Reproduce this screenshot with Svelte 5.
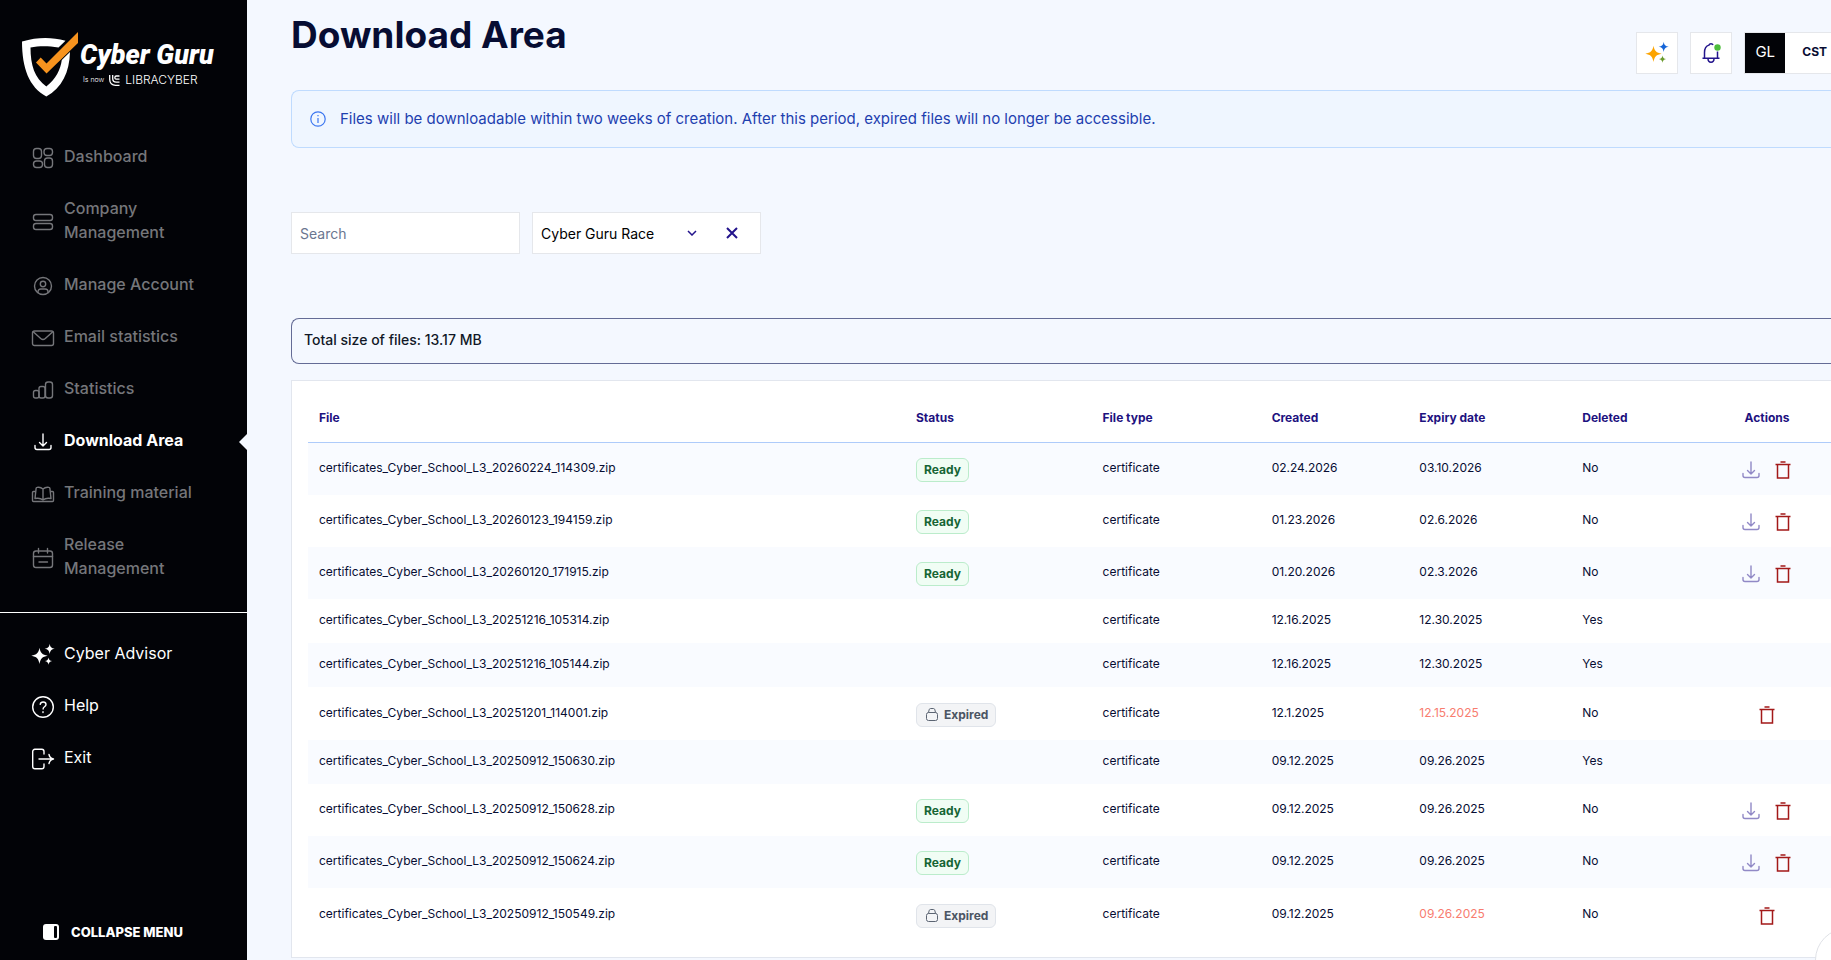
<script lang="ts">
  type Row = {
    file: string
    status: "Ready" | "Expired" | ""
    created: string
    expiry: string
  }

  const menu = [
    { icon: "dashboard", label: "Dashboard" },
    { icon: "company", label: "Company Management" },
    { icon: "account", label: "Manage Account" },
    { icon: "mail", label: "Email statistics" },
    { icon: "stats", label: "Statistics" },
    { icon: "download", label: "Download Area" },
    { icon: "book", label: "Training material" },
    { icon: "calendar", label: "Release Management" },
  ]
  const tools = [
    { icon: "sparkles", label: "Cyber Advisor" },
    { icon: "help", label: "Help" },
    { icon: "exit", label: "Exit" },
  ]
  const current = "Download Area"

  const rows: Row[] = [
    { file: "20260224_114309", status: "Ready", created: "02.24.2026", expiry: "03.10.2026" },
    { file: "20260123_194159", status: "Ready", created: "01.23.2026", expiry: "02.6.2026" },
    { file: "20260120_171915", status: "Ready", created: "01.20.2026", expiry: "02.3.2026" },
    { file: "20251216_105314", status: "", created: "12.16.2025", expiry: "12.30.2025" },
    { file: "20251216_105144", status: "", created: "12.16.2025", expiry: "12.30.2025" },
    { file: "20251201_114001", status: "Expired", created: "12.1.2025", expiry: "12.15.2025" },
    { file: "20250912_150630", status: "", created: "09.12.2025", expiry: "09.26.2025" },
    { file: "20250912_150628", status: "Ready", created: "09.12.2025", expiry: "09.26.2025" },
    { file: "20250912_150624", status: "Ready", created: "09.12.2025", expiry: "09.26.2025" },
    { file: "20250912_150549", status: "Expired", created: "09.12.2025", expiry: "09.26.2025" },
  ]

  let search = $state("")
  let product = $state("race")
  let shown = $derived(rows.filter((r) => r.file.includes(search)))
</script>

{#snippet icon(name: string)}
  <svg class="icon" viewBox="0 0 24 24" width="24" height="24" aria-hidden="true">
    {#if name === "dashboard"}
      <rect x="2.5" y="2.5" width="8" height="10" rx="3" />
      <rect x="13" y="2.5" width="8.5" height="7" rx="3" />
      <rect x="2.5" y="15" width="9" height="6.5" rx="3" />
      <rect x="13.5" y="12" width="8" height="9.5" rx="3" />
    {:else if name === "company"}
      <rect x="2.5" y="4.5" width="19" height="6" rx="2.5" />
      <rect x="2.5" y="13.5" width="19" height="6" rx="2.5" />
    {:else if name === "account"}
      <circle cx="12" cy="12" r="8.5" />
      <circle cx="12" cy="10" r="2.7" />
      <path d="M7 18.8v-1c0-1.7 1.2-2.8 2.8-2.8h4.4c1.6 0 2.8 1.1 2.8 2.8v1" />
    {:else if name === "mail"}
      <rect x="1.5" y="5" width="21" height="14.5" rx="2" />
      <path d="M2.5 6l7.2 6.5c1.4 1.2 3.2 1.2 4.6 0L21.5 6" />
    {:else if name === "stats"}
      <rect x="2.5" y="12.5" width="5.5" height="7.5" rx="2" />
      <rect x="8" y="8.5" width="6" height="11.5" rx="2" />
      <rect x="14.5" y="4" width="7" height="16" rx="2.5" />
    {:else if name === "download"}
      <path d="M12 4v12M8.500 12.5l3.5 3.5 3.5-3.500M4 15.5v2c0 1.4.9 2 2 2h12c1.100 0 2-.6 2-2v-2" />
    {:else if name === "book"}
      <path d="M12 7c-2-1.800-4.500-2-6-1.600-.6.1-.8.4-.9 1L4 16.500c2.500-.5 6-.2 8 1.500 2-1.700 5.500-2 8-1.500L18.900 6.400c-.1-.6-.3-.9-.9-1C16.500 5 14 5.200 12 7zM12 7v11" />
      <path d="M4 9.500H2.500c-.6 0-1 .4-1 1v8c0 .6.4 1 1 1h19c.6 0 1-.4 1-1v-8c0-.6-.4-1-1-1H20" />
    {:else if name === "calendar"}
      <rect x="2.5" y="5" width="19" height="16.5" rx="2.5" />
      <path d="M7.5 2.5V7M16.5 2.5V7M2.5 10.5h19M8 16h8.5" />
    {:else if name === "help"}
      <circle cx="12" cy="12" r="10.3" />
      <path d="M9.2 9.3c.3-1.5 1.4-2.3 2.9-2.3 1.7 0 2.9 1 2.9 2.5 0 2.3-2.9 2.3-2.9 4.5M12 16.7v.9" />
    {:else if name === "exit"}
      <path d="M13 7V4.5c0-1.3-.9-2.2-2.2-2.200H3.900c-1.300 0-2.200.9-2.200 2.200v15c0 1.300.9 2.200 2.200 2.200h6.900c1.300 0 2.200-.9 2.200-2.200V17M8 12h14.500M18 7.500c.5 2.500 2 4 4.500 4.500-2.500.5-4 2-4.500 4.500" />
    {:else if name === "sparkles"}
      {@render sparkles()}
    {/if}
  </svg>
{/snippet}

{#snippet sparkles()}
  <path class="star one" d="M8.500 4.800c.9 5.200 2.800 7.100 8.200 7.900-5.400.9-7.300 3-8.200 8.300-.9-5.300-2.800-7.400-8.200-8.300 5.400-.8 7.300-2.700 8.200-7.900z" />
  <path class="star two" d="M18.700.8c.6 3.400 1.700 4.500 5 5-3.300.6-4.400 1.800-5 5.100-.6-3.300-1.700-4.500-5-5.100 3.300-.5 4.400-1.600 5-5z" />
  <path class="star three" d="M17.500 14.500c.4 2.400 1.300 3.300 3.600 3.600-2.300.5-3.200 1.400-3.600 3.700-.4-2.300-1.300-3.200-3.600-3.700 2.300-.3 3.200-1.200 3.600-3.600z" />
{/snippet}

<div class="page">
  <aside class="sidebar">
    <a class="logo" href="#home" aria-label="Cyber Guru">
      <svg width="58" height="66" viewBox="0 0 58 66" aria-hidden="true">
        <path fill="#fff" d="M0 9.500C16 5 29 5 43.500 8.700L36.500 15.500C26 13.700 17 13.800 8.500 15.500C8.500 33 12.500 46 24.300 54.500C34 47 38.500 37.500 39.800 28L48 20C47.500 40 40 56 24.300 64.500C7 55 0 36 0 9.500z" />
        <path fill="#f7931e" d="M14 30.500L18.700 25.500L24.500 31.500L56 0V11L24.500 41.500z" />
      </svg>
      <span class="brand">
        <span class="brand-name">Cyber Guru</span>
        <span class="brand-sub">
          <small>Is now</small>
          <svg width="11" height="11" viewBox="0 0 11 11" fill="none" stroke="#fff" stroke-width="1.300" aria-hidden="true">
            <path d="M.7 0v4.500C.7 8 3 10.300 6.500 10.300h4M3.700 0v3.500c0 2.300 1.300 3.700 3.500 3.700h3.300M10.500 1H7.200C5.600 1 5.200 4.200 7.200 4.200h3.300" />
          </svg>
          <span>LIBRACYBER</span>
        </span>
      </span>
    </a>

    <nav class="menu">
      {#each menu as item}
        <a href="#menu" class="item" class:active={item.label === current}>
          {@render icon(item.icon)}
          <span class="label">{item.label}</span>
        </a>
      {/each}
    </nav>
    <nav class="menu tools">
      {#each tools as item}
        <a href="#tools" class="item">
          {@render icon(item.icon)}
          <span class="label">{item.label}</span>
        </a>
      {/each}
    </nav>

    <button class="collapse">
      <svg width="16" height="16" viewBox="0 0 16 16" aria-hidden="true">
        <rect width="16" height="16" rx="3" fill="#fff" />
        <rect x="11" y="2" width="3" height="12" rx="1" fill="#020307" />
      </svg>
      Collapse menu
    </button>
  </aside>

  <main>
    <header>
      <h1>Download Area</h1>
      <div class="top">
        <button class="square" aria-label="Cyber Advisor">
          <svg class="color" width="24" height="24" viewBox="0 0 24 24">{@render sparkles()}</svg>
        </button>
        <button class="square" aria-label="Notifications">
          <svg width="22" height="22" viewBox="0 0 22 22" fill="none" stroke="#23148c" stroke-width="1.500">
            <path d="M2.500 16.300h17M4.500 16V10.500C4.500 6.500 6.500 3.800 9 3.100 9.300 2.200 10 1.700 11 1.700s1.700.5 2 1.400M17.500 9.500V16M8 16.500c0 2.500 1.200 3.700 3 3.700s3-1.200 3-3.700" />
            <circle cx="17.500" cy="5.500" r="3.200" fill="#4dbd3c" stroke="none" />
          </svg>
        </button>
        <button class="user"><span class="initials">GL</span><span class="zone">CST</span></button>
      </div>
    </header>

    <p class="notice">
      <svg width="16" height="16" viewBox="0 0 16 16" fill="none" stroke="#3b76f0" stroke-width="1.200" aria-hidden="true">
        <circle cx="8" cy="8" r="7.200" />
        <path d="M8 7v5M8 4v1.300" />
      </svg>
      Files will be downloadable within two weeks of creation. After this period, expired files will no longer be accessible.
    </p>

    <div class="filters">
      <input class="field" type="text" placeholder="Search" aria-label="Search" bind:value={search} />
      <div class="field picker">
        <select aria-label="Product" bind:value={product}>
          <option value=""></option>
          <option value="race">Cyber Guru Race</option>
        </select>
        <svg width="10" height="6" viewBox="0 0 10 6" aria-hidden="true"><path d="M1 1l4 4 4-4" /></svg>
        <button aria-label="Clear" onclick={() => (product = "")}>
          <svg width="12" height="12" viewBox="0 0 12 12"><path d="M1 1l10 10M11 1L1 11" /></svg>
        </button>
      </div>
    </div>

    <p class="total">Total size of files: 13.17 MB</p>

    <section class="card">
      <table>
        <colgroup>
          <col class="c-file" /><col class="c-status" /><col class="c-type" /><col class="c-created" />
          <col class="c-expiry" /><col class="c-deleted" /><col />
        </colgroup>
        <thead>
          <tr>
            <th>File</th>
            <th>Status</th>
            <th>File type</th>
            <th>Created</th>
            <th>Expiry date</th>
            <th>Deleted</th>
            <th class="center">Actions</th>
          </tr>
        </thead>
        <tbody>
          {#each shown as row}
            <tr class:old={row.status === "Expired"}>
              <td>certificates_Cyber_School_L3_{row.file}.zip</td>
              <td class="low">
                {#if row.status === "Ready"}
                  <span class="badge ready">Ready</span>
                {:else if row.status === "Expired"}
                  <span class="badge expired">
                    <svg width="12" height="13" viewBox="0 0 12 13" fill="none" stroke="#5b6472" aria-hidden="true">
                      <rect x=".5" y="4.500" width="11" height="8" rx="2" />
                      <path d="M2.500 4.500l.6-2.700C3.300 1 3.800.5 4.600.5h2.800c.8 0 1.300.5 1.500 1.300l.6 2.700" />
                    </svg>
                    Expired
                  </span>
                {/if}
              </td>
              <td>certificate</td>
              <td>{row.created}</td>
              <td class:late={row.status === "Expired"}>{row.expiry}</td>
              <td>{row.status ? "No" : "Yes"}</td>
              <td class="center low">
                {#if row.status}
                  <div class="actions">
                    {#if row.status === "Ready"}
                      <button class="get" aria-label="Download">{@render icon("download")}</button>
                    {/if}
                    <button class="del" aria-label="Delete">
                      <svg width="24" height="24" viewBox="0 0 24 24">
                        <path d="M9.500 4h5M4.500 6.500h15M6.500 7v13h11V7" />
                      </svg>
                    </button>
                  </div>
                {/if}
              </td>
            </tr>
          {/each}
        </tbody>
      </table>
    </section>
  </main>
  <button class="chat" aria-label="Chat"></button>
</div>

<style>
  :global(body) {
    background: #f4f8ff;
    overflow: hidden;
  }

  .page {
    display: flex;
    min-height: 100vh;
    font-family: Inter, "Noto Sans", sans-serif;
    color: #070d33;
  }
  button {
    font: inherit;
    padding: 0;
    border: none;
    background: none;
    cursor: pointer;
  }
  svg {
    flex: none;
  }

  /* sidebar */
  .sidebar {
    flex: 0 0 247px;
    box-sizing: border-box;
    height: 100vh;
    display: flex;
    flex-direction: column;
    background: #020307;
    color: #fff;
  }
  .logo {
    display: flex;
    height: 100px;
    padding: 32px 0 0 22px;
    box-sizing: border-box;
    margin-bottom: 32px;
    color: #fff;
    text-decoration: none;
  }
  .brand {
    display: flex;
    flex-direction: column;
    padding-top: 6px;
  }
  .brand-name {
    font: italic 900 27px/34px Roboto, sans-serif;
    white-space: nowrap;
  }
  .brand-sub {
    display: flex;
    align-items: center;
    gap: 5px;
    padding: 1px 0 0 3px;
    font-size: 12px;
    line-height: 14px;
    font-weight: 300;
  }
  .brand-sub small {
    font-size: 7px;
  }
  .item {
    position: relative;
    display: flex;
    align-items: center;
    gap: 9px;
    padding: 12px 48px 12px 31px;
    color: #75767a;
    font-size: 16px;
    line-height: 24px;
    font-weight: 500;
    text-decoration: none;
  }
  .label {
    padding-bottom: 4px;
  }
  .active {
    color: #fff;
    font-weight: 700;
  }
  .active::after {
    content: "";
    position: absolute;
    right: 0;
    top: 18px;
    border: 8px solid transparent;
    border-left: none;
    border-right-color: #f4f8ff;
  }
  .icon {
    fill: none;
    stroke: currentColor;
    stroke-width: 1.4;
    stroke-linecap: round;
    stroke-linejoin: round;
  }
  .star {
    fill: #fff;
    stroke: none;
  }
  .tools {
    margin-top: 16px;
    padding-top: 16px;
    border-top: 1px solid #fff;
  }
  .tools .item {
    color: #fff;
    font-weight: 400;
  }
  .collapse {
    display: flex;
    align-items: center;
    gap: 12px;
    margin: auto 0 18px 43px;
    color: #fff;
    font-size: 13px;
    line-height: 20px;
    font-weight: 800;
    text-transform: uppercase;
  }

  /* content */
  main {
    flex: 1;
    min-width: 0;
    padding-left: 44px;
  }
  header {
    display: flex;
    justify-content: space-between;
    height: 90px;
  }
  h1 {
    margin: 15px 0 0;
    font-size: 37px;
    line-height: 40px;
    font-weight: 700;
  }
  .top {
    display: flex;
    gap: 12px;
    margin-top: 32px;
    height: 42px;
  }
  .square {
    display: grid;
    place-items: center;
    width: 42px;
    box-sizing: border-box;
    border: 1px solid #e5e7eb;
    background: #fff;
  }
  .color .one {
    fill: #fca400;
  }
  .color .two {
    fill: #1565d8;
  }
  .color .three {
    fill: #6a9a2c;
  }
  .user {
    display: flex;
    border: 1px solid #e5e7eb;
    border-right: none;
    background: #fff;
    line-height: 38px;
    color: #070d33;
  }
  .initials {
    width: 40px;
    height: 40px;
    background: #020307;
    color: #fff;
    font-size: 15px;
  }
  .zone {
    padding: 0 4px 0 17px;
    font-size: 12px;
    font-weight: 700;
  }

  .notice {
    display: flex;
    align-items: center;
    gap: 14px;
    margin: 0;
    padding: 18px;
    border: 1px solid #bfdbfe;
    border-right: none;
    border-radius: 8px 0 0 8px;
    background: #eff6ff;
    color: #1e40af;
    font-size: 15px;
    line-height: 20px;
  }
  .filters {
    display: flex;
    gap: 12px;
    margin: 64px 0;
  }
  .field {
    width: 229px;
    height: 42px;
    box-sizing: border-box;
    padding: 0 8px;
    border: 1px solid #e5e7eb;
    border-radius: 0;
    background: #fff;
    font: inherit;
    font-size: 14px;
  }
  .field::placeholder {
    color: #6b7690;
  }
  .picker {
    display: flex;
    align-items: center;
    padding-right: 22px;
  }
  .picker select {
    flex: 1;
    appearance: none;
    padding: 0;
    border: none;
    background: none;
    color: #000;
    font: inherit;
  }
  .picker svg {
    display: block;
    fill: none;
    stroke: #23148c;
    stroke-width: 2;
  }
  .picker > svg {
    stroke-width: 1.5;
  }
  .picker button {
    margin-left: 29px;
  }
  .total {
    margin: 0 0 16px;
    padding: 10px 12px 12px;
    border: 1px solid #646c96;
    border-right: none;
    border-radius: 8px 0 0 8px;
    color: #111827;
    font-size: 14px;
    line-height: 22px;
    font-weight: 500;
  }

  .card {
    padding: 16px 0 16px 16px;
    border: 1px solid #e2e6ee;
    border-right: none;
    background: #fff;
  }
  table {
    width: 100%;
    table-layout: fixed;
    border-collapse: collapse;
    font-size: 12px;
    line-height: 16px;
  }
  .c-file { width: 39.2%; }
  .c-status { width: 12.25%; }
  .c-type { width: 11.1%; }
  .c-created { width: 9.7%; }
  .c-expiry { width: 10.7%; }
  .c-deleted { width: 8.65%; }
  th {
    padding: 13px 11px 16px;
    border-bottom: 1px solid #aecbfa;
    color: #1e127f;
    font-weight: 700;
    text-align: left;
  }
  td {
    padding: 13px 11px 15px;
  }
  td.low {
    padding-top: 15px;
    padding-bottom: 13px;
  }
  .old td {
    height: 25px;
  }
  tbody tr:nth-child(odd) {
    background: #f9fbff;
  }
  th.center,
  td.center {
    padding-left: 0;
    padding-right: 0;
    text-align: center;
  }
  .late {
    color: #f87c6f;
  }
  .badge {
    display: flex;
    align-items: center;
    gap: 6px;
    width: max-content;
    height: 24px;
    box-sizing: border-box;
    padding: 0 7px;
    border: 1px solid;
    border-radius: 6px;
    font-weight: 700;
  }
  .ready {
    border-color: #bbeccb;
    background: #f0fdf4;
    color: #166534;
  }
  .expired {
    padding-left: 9px;
    border-color: #e0e4ea;
    background: #f3f4f6;
    color: #4b5563;
  }
  .actions {
    display: flex;
    justify-content: center;
    gap: 8px;
  }
  .actions button,
  .actions svg {
    display: block;
    width: 24px;
    height: 24px;
  }
  .get {
    color: #9189c6;
  }
  .del path {
    fill: none;
    stroke: #a31919;
    stroke-width: 1.5;
  }
  .chat {
    position: fixed;
    right: -48px;
    bottom: -32px;
    width: 64px;
    height: 64px;
    border: 1px solid #dfe1e6;
    border-radius: 50%;
    background: #fff;
  }
</style>
